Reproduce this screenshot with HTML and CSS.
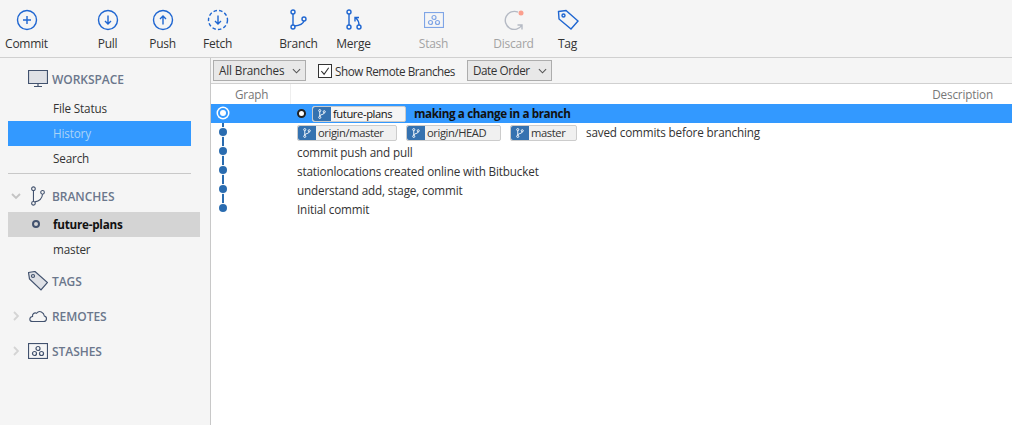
FILE: index.html
```html
<!DOCTYPE html>
<html lang="en">
<head>
    <meta charset="UTF-8">
    <title>Sourcetree</title>
    <link rel="stylesheet" href="styles.css">
</head>
<body>
    <svg class="defs" width="0" height="0">
        <symbol id="branch-tag" viewBox="0 0 16 16">
            <circle cx="5" cy="3.500" r="1.400"/>
            <circle cx="5" cy="12.500" r="1.400"/>
            <circle cx="11" cy="5" r="1.400"/>
            <path d="M5 5v6M5 11c0-3 6-1.500 6-4.700"/>
        </symbol>
        <symbol id="stash-icon" viewBox="0 0 20 16">
            <rect x="0.500" y="0.500" width="19" height="15"/>
            <circle cx="10" cy="5.500" r="2"/>
            <circle cx="6.500" cy="10.500" r="2"/>
            <circle cx="13.500" cy="10.500" r="2"/>
        </symbol>
    </svg>

    <div class="toolbar">
        <div class="tool tool-commit">
            <svg viewBox="0 0 22 22"><circle cx="11" cy="11" r="9.500"/><path d="M11 7v8M7 11h8"/></svg>
            <span>Commit</span>
        </div>
        <div class="tool tool-pull">
            <svg viewBox="0 0 22 22"><circle cx="11" cy="11" r="9.500"/><path d="M11 6.500v8.500M8 12l3 3 3-3"/></svg>
            <span>Pull</span>
        </div>
        <div class="tool">
            <svg viewBox="0 0 22 22"><circle cx="11" cy="11" r="9.500"/><path d="M11 15.500V7M8 10l3-3 3 3"/></svg>
            <span>Push</span>
        </div>
        <div class="tool">
            <svg viewBox="0 0 22 22"><circle cx="11" cy="11" r="9.500" stroke-dasharray="3.500 2.200"/><path d="M11 6.500v8.500M8 12l3 3 3-3"/></svg>
            <span>Fetch</span>
        </div>
        <div class="tool tool-branch">
            <svg viewBox="1 0 22 22"><circle cx="6" cy="3" r="2"/><circle cx="6" cy="18" r="2"/><circle cx="17" cy="10" r="2"/><path d="M6 5v11M7.500 17C12 16.500 16 15 17 12"/></svg>
            <span>Branch</span>
        </div>
        <div class="tool">
            <svg viewBox="-2 0 22 22"><circle cx="4" cy="3" r="2"/><circle cx="4" cy="18" r="2"/><circle cx="14" cy="18" r="2"/><path d="M4 5v11M14 16c0-3-1-5-3-7M10 12.500V8.500h4"/></svg>
            <span>Merge</span>
        </div>
        <div class="tool tool-stash is-disabled">
            <svg viewBox="0 0 20 16"><use href="#stash-icon"/></svg>
            <span>Stash</span>
        </div>
        <div class="tool tool-discard is-disabled">
            <svg viewBox="0 0 22 22"><path class="grey" d="M15 3.200A9 9 0 1 0 19 16M19 20.500V16h-4.500"/><circle class="dot" cx="18" cy="4" r="2.500"/></svg>
            <span>Discard</span>
        </div>
        <div class="tool tool-tag">
            <svg viewBox="0 0 22 22"><path d="M1.500 2.500 9 1.500 21 12l-7 8L2 10z"/><circle cx="6.500" cy="6.500" r="1.500"/></svg>
            <span>Tag</span>
        </div>
    </div>

    <div class="main">
        <div class="sidebar">
            <div class="group group-workspace">
                <svg class="group-icon" viewBox="0 0 20 18"><path class="fill" d="M0.500 0.500h19v13h-19z"/><path d="M10 13.500v3M6 16.500h8"/></svg>
                <span>WORKSPACE</span>
            </div>
            <div class="item">File Status</div>
            <div class="item item-selected">History</div>
            <div class="item">Search</div>
            <div class="divider"></div>
            <div class="group group-branches">
                <svg class="chevron" viewBox="0 0 10 10"><path d="M1 3l4 4 4-4"/></svg>
                <svg class="group-icon" viewBox="0 0 20 22"><circle cx="5" cy="3" r="2"/><circle cx="5" cy="19" r="2"/><circle cx="15" cy="7" r="2"/><path d="M5 5v12M6.500 17.500C12 16.500 14.500 14 15 9"/></svg>
                <span>BRANCHES</span>
            </div>
            <div class="item item-current"><i class="current-dot"></i>future-plans</div>
            <div class="item">master</div>
            <div class="group group-tags">
                <svg class="group-icon" viewBox="0 0 20 20"><path class="fill" d="M0.500 1.500 7 0.500 19.500 11.500 13 19 1.500 8z"/><circle cx="5" cy="5" r="1.500"/></svg>
                <span>TAGS</span>
            </div>
            <div class="group">
                <svg class="chevron chevron-closed" viewBox="0 0 10 10"><path d="M3 1l4 4-4 4"/></svg>
                <svg class="group-icon" viewBox="-1 -2 22 18"><path d="M4 13h12c4 0 4.500-5 1-6-.5-4-5.500-7-8.500-3C6 2.500 3.500 5 4 7.500 0 8 0 13 4 13z"/></svg>
                <span>REMOTES</span>
            </div>
            <div class="group">
                <svg class="chevron chevron-closed" viewBox="0 0 10 10"><path d="M3 1l4 4-4 4"/></svg>
                <svg class="group-icon" viewBox="0 0 20 16"><use href="#stash-icon"/></svg>
                <span>STASHES</span>
            </div>
        </div>

        <div class="content">
            <div class="filters">
                <div class="dropdown dropdown-branches">All Branches<svg viewBox="0 0 10 6"><path d="M1 1l4 4 4-4"/></svg></div>
                <label class="remote-check">
                    <span class="box"><svg viewBox="0 0 13 13"><path d="M2.500 6.500l3 3.500 5-7"/></svg></span>
                    Show Remote Branches
                </label>
                <div class="dropdown dropdown-order">Date Order<svg viewBox="0 0 10 6"><path d="M1 1l4 4 4-4"/></svg></div>
            </div>
            <div class="columns">
                <div class="col-graph">Graph</div>
                <div class="col-desc">Description</div>
            </div>
            <div class="row row-selected">
                <div class="graph"><i class="node node-head"></i></div>
                <div class="desc">
                    <i class="current-ring"></i>
                    <span class="ref ref-head"><span class="ref-icon"><svg><use href="#branch-tag"/></svg></span>future-plans</span>
                    <b>making a change in a branch</b>
                </div>
            </div>
            <div class="row">
                <div class="graph"><i class="node"></i></div>
                <div class="desc">
                    <span class="ref ref-origin"><span class="ref-icon"><svg><use href="#branch-tag"/></svg></span>origin/master</span>
                    <span class="ref ref-originhead"><span class="ref-icon"><svg><use href="#branch-tag"/></svg></span>origin/HEAD</span>
                    <span class="ref ref-master"><span class="ref-icon"><svg><use href="#branch-tag"/></svg></span>master</span>
                    saved commits before branching
                </div>
            </div>
            <div class="row">
                <div class="graph"><i class="node"></i></div>
                <div class="desc desc-plain">commit push and pull</div>
            </div>
            <div class="row">
                <div class="graph"><i class="node"></i></div>
                <div class="desc desc-plain">stationlocations created online with Bitbucket</div>
            </div>
            <div class="row">
                <div class="graph"><i class="node"></i></div>
                <div class="desc desc-plain">understand add, stage, commit</div>
            </div>
            <div class="row row-last">
                <div class="graph"><i class="node"></i></div>
                <div class="desc desc-plain">Initial commit</div>
            </div>
        </div>
    </div>
</body>
</html>
```

FILE: styles.css
```css
html, body {
    margin: 0;
    padding: 0;
    height: 100%;
    overflow: hidden;
}
body {
    font-family: 'Open Sans', 'Noto Sans', sans-serif;
    font-size: 11.7px;
    letter-spacing: -0.15px;
    color: #333;
    background: #fff;
}
.defs {
    position: absolute;
}
svg {
    fill: none;
    stroke-width: 1.2;
}

/* toolbar */
.toolbar {
    display: flex;
    height: 57px;
    background: #f5f5f5;
    border-bottom: 1px solid #d0d0d0;
}
.tool {
    width: 55px;
    height: 57px;
    flex: none;
    display: flex;
    flex-direction: column;
    align-items: center;
    position: relative;
}
.tool svg {
    width: 22px;
    height: 22px;
    margin-top: 9px;
    stroke: #1f66d1;
    stroke-width: 1.4;
    flex: none;
}
.tool span {
    margin-top: 4px;
    line-height: 17px;
    font-size: 12px;
    letter-spacing: -0.25px;
}
.tool-commit { margin-left: -1px; }
.tool-pull { margin-left: 26px; }
.tool-branch { margin-left: 26px; }
.tool-stash { margin-left: 25px; }
.tool-discard { margin-left: 25px; }
.tool-tag { margin-left: -1px; }
.is-disabled span {
    color: #a3a3a3;
}
.tool-stash svg {
    width: 20px;
    height: 16px;
    margin-top: 12px;
    margin-bottom: 3px;
    stroke: #7fa5e6;
    stroke-width: 1.2;
}
.tool-discard svg .grey {
    stroke: #b5bac4;
}
.tool-discard svg .dot {
    stroke: none;
    fill: #fb9f8e;
}

/* layout */
.main {
    display: flex;
    height: 367px;
}
.sidebar {
    width: 211px;
    flex: none;
    box-sizing: border-box;
    background: #f5f5f5;
    border-right: 1px solid #c8c8c8;
    padding-top: 6px;
}
.content {
    flex: 1;
    min-width: 0;
}

/* sidebar */
.group {
    height: 30px;
    display: flex;
    align-items: center;
    padding-left: 28px;
    color: #6b778c;
    font-weight: 600;
    font-size: 12px;
    letter-spacing: -0.05px;
    position: relative;
    margin-top: 5px;
}
.group span {
    margin-left: 4px;
}
.group-workspace {
    margin-top: 0;
    margin-bottom: 2px;
}
.group-branches {
    margin-top: 7px;
    margin-bottom: 1px;
}
.group-tags {
    margin-top: 4px;
}
.group-icon {
    width: 20px;
    height: 20px;
    flex: none;
    stroke: #42526e;
    fill: none;
}
.group-icon .fill {
    fill: #dfe1e6;
}
.chevron {
    position: absolute;
    left: 11px;
    top: 10px;
    width: 10px;
    height: 10px;
    stroke: #c4c4c4;
    stroke-width: 1.8;
}
.chevron-closed {
    stroke: #d4d4d4;
}
.item {
    height: 25px;
    line-height: 25px;
    margin-left: 8px;
    margin-right: 19px;
    padding-left: 45px;
}
.item-selected {
    background: #3399ff;
    color: #a9d3f7;
}
.item-current {
    margin-right: 10px;
    background: #d4d4d4;
    color: #111;
    font-weight: 700;
    letter-spacing: -0.25px;
    position: relative;
}
.current-dot {
    position: absolute;
    left: 24px;
    top: 8px;
    width: 4px;
    height: 4px;
    border: 2.500px solid #42526e;
    border-radius: 50%;
}
.divider {
    height: 1px;
    margin: 2px 19px 0 8px;
    background: #c8c8c8;
}

/* filter bar */
.filters {
    display: flex;
    align-items: center;
    height: 25px;
    background: #f5f5f5;
    border-bottom: 1px solid #d0d0d0;
    padding-left: 2px;
}
.dropdown {
    height: 19px;
    line-height: 19px;
    background: #e8e8e8;
    border: 1px solid #adadad;
    padding-left: 5px;
    display: flex;
    align-items: center;
}
.dropdown svg {
    width: 9px;
    height: 6px;
    stroke: #555;
    margin-left: 8px;
}
.dropdown-branches { width: 86px; }
.dropdown-order {
    width: 78px;
    letter-spacing: -0.45px;
}
.remote-check {
    display: flex;
    align-items: center;
    gap: 3px;
    margin-left: 12px;
    width: 149px;
    letter-spacing: -0.45px;
}
.box {
    width: 12px;
    height: 12px;
    background: #fff;
    border: 1px solid #333;
    flex: none;
}
.box svg {
    display: block;
    width: 12px;
    height: 12px;
    stroke: #333;
}

/* commit list */
.columns {
    display: flex;
    height: 20px;
    line-height: 20px;
    color: #777;
}
.col-graph {
    width: 80px;
    box-sizing: border-box;
    padding-left: 24px;
    border-right: 1px solid #eee;
}
.col-desc {
    flex: 1;
    text-align: right;
    padding-right: 19px;
}
.row {
    display: flex;
    height: 19px;
    line-height: 19px;
    color: #333;
}
.row-selected {
    background: #3399ff;
    color: #111;
}
.row-selected b {
    letter-spacing: -0.4px;
}
.graph {
    width: 79px;
    flex: none;
    position: relative;
}
.graph::before {
    content: "";
    position: absolute;
    left: 11px;
    top: 0;
    bottom: 0;
    width: 2px;
    background: #2a6cb0;
}
.row-selected .graph::before {
    display: none;
}
.row-last .graph::before {
    bottom: 9px;
}
.node {
    position: absolute;
    left: 8px;
    top: 5px;
    width: 8px;
    height: 8px;
    border-radius: 50%;
    background: #2a6cb0;
    box-shadow: 0 0 0 1px #fff;
}
.node-head {
    left: 7px;
    top: 4px;
    width: 6px;
    height: 6px;
    background: #3399ff;
    border: 2px solid #3399ff;
    box-shadow: 0 0 0 1.500px #fff;
}
.node-head::after {
    content: "";
    position: absolute;
    left: 0;
    top: 0;
    width: 6px;
    height: 6px;
    border-radius: 50%;
    background: #fff;
}
.desc {
    flex: 1;
    display: flex;
    align-items: center;
    padding-left: 7px;
    white-space: nowrap;
}
.desc-plain {
    padding-top: 2px;
}
.current-ring {
    width: 5px;
    height: 5px;
    border: 2px solid #222;
    border-radius: 50%;
    background: #fff;
    margin-right: 6px;
    flex: none;
}
.ref {
    display: flex;
    align-items: center;
    height: 14px;
    font-size: 11.2px;
    letter-spacing: -0.4px;
    background: #f0f0f0;
    border: 1px solid #ccc;
    border-radius: 2px;
    margin-right: 9px;
    flex: none;
}
.ref-icon {
    width: 18px;
    height: 14px;
    background: #3572b0;
    border-radius: 2px 0 0 2px;
    margin-right: 2px;
    display: flex;
    align-items: center;
    justify-content: center;
}
.ref-icon svg {
    width: 12px;
    height: 12px;
    stroke: #fff;
}
.ref-head { width: 92px; margin-right: 8px; background: #f5f5f5; }
.ref-origin { width: 98px; }
.ref-originhead { width: 93px; }
.ref-master { width: 65px; }
```
